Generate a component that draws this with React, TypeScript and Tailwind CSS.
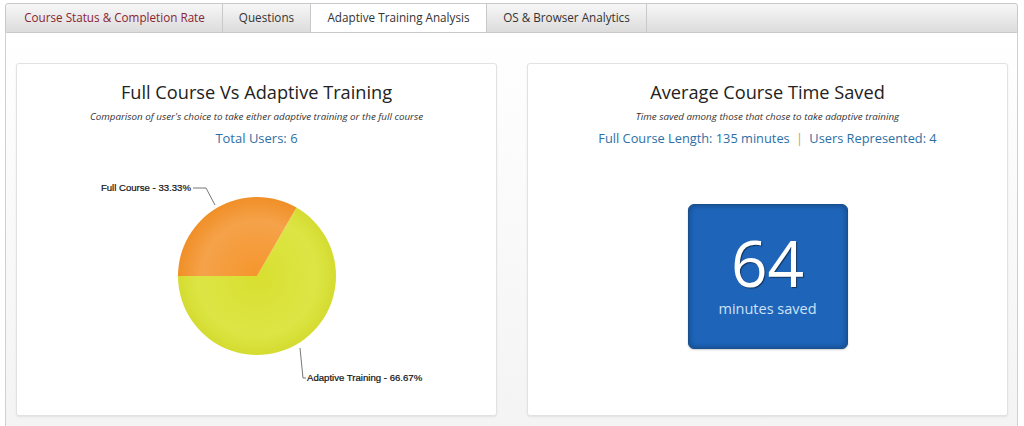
import React from "react";

const font = { fontFamily: '"Open Sans", "Noto Sans", sans-serif' };

function Tab({ label, active, w, red }: { label: string; active?: boolean; w: string; red?: boolean }) {
  return (
    <div
      className={
        "flex h-full items-center justify-center border-r border-[#c9c9c9] text-[11.7px] " +
        w +
        " " +
        (active ? "relative z-10 -mb-px h-[30px] bg-white text-[#333]" : red ? "text-[#8b2432]" : "text-[#333]")
      }
    >
      {label}
    </div>
  );
}

function Pie() {
  const cx = 240;
  const cy = 126;
  const r = 79;
  const px = cx + r * Math.cos(Math.PI / 3);
  const py = cy - r * Math.sin(Math.PI / 3);
  const lbl = { fontFamily: '"Liberation Sans", Arial, sans-serif' };
  return (
    <svg width="481" height="260" className="block">
      <defs>
        <radialGradient id="go2" cx={cx} cy={cy} r={r} gradientUnits="userSpaceOnUse">
          <stop offset="0%" stopColor="#f5962c" />
          <stop offset="70%" stopColor="#f5a24a" />
          <stop offset="100%" stopColor="#f08f27" />
        </radialGradient>
        <radialGradient id="gy2" cx={cx} cy={cy} r={r} gradientUnits="userSpaceOnUse">
          <stop offset="0%" stopColor="#d8df30" />
          <stop offset="75%" stopColor="#dde545" />
          <stop offset="100%" stopColor="#d4dc31" />
        </radialGradient>
      </defs>
      <path d={`M${cx},${cy} L${px},${py} A${r},${r} 0 1,1 ${cx - r},${cy} Z`} fill="url(#gy2)" />
      <path d={`M${cx},${cy} L${cx - r},${cy} A${r},${r} 0 0,1 ${px},${py} Z`} fill="url(#go2)" />
      <polyline points="176,38 189,38 198,55" fill="none" stroke="#777" strokeWidth="1" />
      <text x="174" y="41" textAnchor="end" fontSize="9.6" fill="#111" stroke="#111" strokeWidth="0.2" style={lbl}>
        Full Course - 33.33%
      </text>
      <polyline points="283,198 286,228 289,228" fill="none" stroke="#777" strokeWidth="1" />
      <text x="290" y="231" fontSize="9.6" fill="#111" stroke="#111" strokeWidth="0.2" style={lbl}>
        Adaptive Training - 66.67%
      </text>
    </svg>
  );
}

export default function App() {
  return (
    <div className="h-[426px] w-[1024px] overflow-hidden bg-white pl-[5px] pr-[6px] pt-[3px]" style={font}>
      <div className="flex h-[30px] rounded-t-[3px] border border-[#c9c9c9] bg-gradient-to-b from-[#f7f7f7] to-[#dcdcdc] pl-[1px]">
        <Tab label="Course Status & Completion Rate" w="w-[216px]" red />
        <Tab label="Questions" w="w-[88px]" />
        <Tab label="Adaptive Training Analysis" w="w-[176px]" active />
        <Tab label="OS & Browser Analytics" w="w-[160px]" />
      </div>
      <div className="h-[420px] border-x border-[#d0d0d0] bg-gradient-to-b from-[#ffffff] to-[#f3f3f3] px-[10px] pt-[30px]">
        <div className="grid grid-cols-[481px_481px] gap-[30px]">
          <div className="h-[353px] rounded-[3px] border border-[#e2e2e2] bg-white shadow-[0_1px_2px_rgba(0,0,0,0.08)]">
            <div className="pt-[15px] text-center">
              <div className="text-[18.2px] leading-[26px] text-[#222]">Full Course Vs Adaptive Training</div>
              <div className="mt-[5px] text-[9.8px] italic leading-[14px] text-[#333]">
                Comparison of user's choice to take either adaptive training or the full course
              </div>
              <div className="mt-[5px] text-[13px] leading-[18px] text-[#2d6fa6]">Total Users: 6</div>
            </div>
            <div className="mt-[3px]">
              <Pie />
            </div>
          </div>
          <div className="h-[353px] rounded-[3px] border border-[#e2e2e2] bg-white shadow-[0_1px_2px_rgba(0,0,0,0.08)]">
            <div className="pt-[15px] text-center">
              <div className="text-[18.2px] leading-[26px] text-[#222]">Average Course Time Saved</div>
              <div className="mt-[5px] text-[9.8px] italic leading-[14px] text-[#333]">
                Time saved among those that chose to take adaptive training
              </div>
              <div className="mt-[5px] text-[12.8px] leading-[18px] text-[#2d6fa6]">
                Full Course Length: 135 minutes <span className="mx-[3px] text-[#d39a55]">|</span> Users Represented: 4
              </div>
            </div>
            <div className="mt-[57px] flex justify-center">
              <div className="flex h-[145px] w-[160px] flex-col items-center rounded-[6px] border border-[#1a4f8e] bg-[#1e65ba] shadow-[inset_0_0_6px_rgba(0,0,0,0.35),0_1px_2px_rgba(0,0,0,0.2)]">
                <div className="mt-[20px] text-[64px] leading-[76px] text-white [text-shadow:1px_1px_1px_rgba(0,0,0,0.5)]">64</div>
                <div className="text-[14.5px] leading-[16px] text-[#cfe1f6]">minutes saved</div>
              </div>
            </div>
          </div>
        </div>
      </div>
    </div>
  );
}
